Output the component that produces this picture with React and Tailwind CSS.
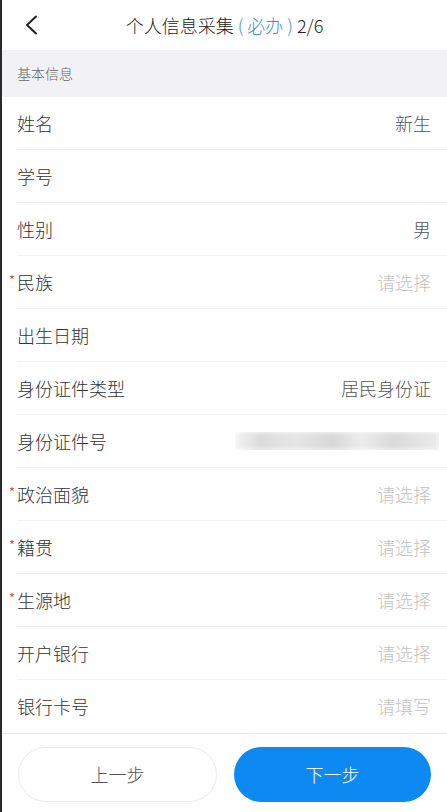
import React from 'react';

const fields = [
  { label: '姓名', value: '新生' },
  { label: '学号', value: '' },
  { label: '性别', value: '男' },
  { label: '民族', placeholder: '请选择', required: true },
  { label: '出生日期', value: '' },
  { label: '身份证件类型', value: '居民身份证' },
  { label: '身份证件号', masked: true },
  { label: '政治面貌', placeholder: '请选择', required: true },
  { label: '籍贯', placeholder: '请选择', required: true },
  { label: '生源地', placeholder: '请选择', required: true },
  { label: '开户银行', placeholder: '请选择' },
  { label: '银行卡号', placeholder: '请填写' },
];

const FieldRow = ({ field, last }) => (
  <div className="relative pl-[15px]">
    {field.required && (
      <span className="absolute left-[7px] top-[17px] text-[13px] leading-none text-[#d9534f]">*</span>
    )}
    <div
      className={`flex h-[53px] items-center justify-between pr-[16px] ${
        last ? '' : 'border-b border-[#f1f1f1]'
      }`}
    >
      <span className="text-[18px] font-light text-[#333]">{field.label}</span>
      {field.masked ? (
        <div className="mr-[-8px] flex h-[18px] w-[204px] items-center overflow-hidden">
          <div className="h-full w-full bg-[linear-gradient(90deg,#f4f4f4_0%,#dcdcdc_12%,#e6e6e6_30%,#d8d8d8_48%,#ececec_62%,#dadada_78%,#ebebeb_100%)] blur-[2px]" />
        </div>
      ) : field.placeholder ? (
        <span className="text-[18px] font-light text-[#c2c2c2]">{field.placeholder}</span>
      ) : (
        <span className="text-[18px] font-light text-[#555]">{field.value}</span>
      )}
    </div>
  </div>
);

const App = () => {
  return (
    <div
      className="flex h-[812px] w-[447px] flex-col overflow-hidden border-l-2 border-[#2a2a2a] bg-white"
      style={{ fontFamily: '"Noto Sans CJK SC", "Noto Sans", sans-serif' }}
    >
      {/* Header */}
      <div className="relative flex h-[50px] shrink-0 items-center justify-center">
        <button className="absolute left-[22px] top-[14px] flex h-[22px] w-[16px] items-center">
          <svg width="14" height="20" viewBox="0 0 14 20" fill="none">
            <path d="M12 1.5 L3 10 L12 18.5" stroke="#222" strokeWidth="2" strokeLinecap="round" strokeLinejoin="round" />
          </svg>
        </button>
        <h1 className="text-[18px] font-light text-[#222]">
          个人信息采集<span className="text-[#3f8fdc]"> ( 必办 ) </span>2/6
        </h1>
      </div>

      {/* Section title */}
      <div className="flex h-[47px] shrink-0 items-center bg-[#f2f2f4] pl-[15px]">
        <span className="text-[14px] font-light text-[#666]">基本信息</span>
      </div>

      {/* Fields */}
      <div className="flex flex-col">
        {fields.map((f, i) => (
          <FieldRow key={f.label} field={f} last={i === fields.length - 1} />
        ))}
      </div>

      {/* Footer buttons */}
      <div className="flex flex-1 gap-[17px] border-t border-[#ececec] px-[16px] pt-[13px]">
        <button className="h-[55px] flex-1 rounded-full border border-[#ececec] bg-white text-[18px] font-light text-[#555]">
          上一步
        </button>
        <button className="h-[55px] flex-1 rounded-full bg-[#0c8af2] text-[18px] font-light text-white">
          下一步
        </button>
      </div>
    </div>
  );
};

export default App;
